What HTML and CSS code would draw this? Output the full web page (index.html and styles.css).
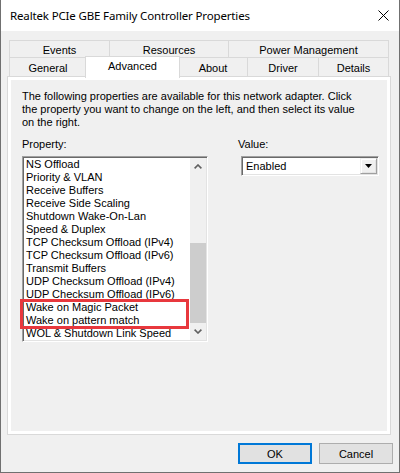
FILE: index.html
```html
<!DOCTYPE html>
<html>
<head>
<meta charset="utf-8">
<title>Realtek PCIe GBE Family Controller Properties</title>
<link rel="stylesheet" href="styles.css">
</head>
<body>
<div class="window">
  <div class="titlebar">
    <span class="title">Realtek PCIe GBE Family Controller Properties</span>
    <svg class="close" width="11" height="11" viewBox="0 0 11 11"><path d="M0.5 0.5L10.5 10.5M10.5 0.5L0.5 10.5" stroke="#000" stroke-width="1" fill="none"/></svg>
  </div>
  <div class="tabs">
    <div class="tabrow row1">
      <div class="tab t-events">Events</div>
      <div class="tab t-resources">Resources</div>
      <div class="tab t-power">Power Management</div>
    </div>
    <div class="tabrow row2">
      <div class="tab t-general">General</div>
      <div class="tab t-advanced selected">Advanced</div>
      <div class="tab t-about">About</div>
      <div class="tab t-driver">Driver</div>
      <div class="tab t-details">Details</div>
    </div>
  </div>
  <div class="panel">
    <div class="page">
      <p class="desc">The following properties are available for this network adapter. Click<br>the property you want to change on the left, and then select its value<br>on the right.</p>
      <div class="fields">
        <div class="col-left">
          <div class="label">Property:</div>
          <div class="listbox">
            <div class="items">
              <div class="item">NS Offload</div>
              <div class="item">Priority &amp; VLAN</div>
              <div class="item">Receive Buffers</div>
              <div class="item">Receive Side Scaling</div>
              <div class="item">Shutdown Wake-On-Lan</div>
              <div class="item">Speed &amp; Duplex</div>
              <div class="item">TCP Checksum Offload (IPv4)</div>
              <div class="item">TCP Checksum Offload (IPv6)</div>
              <div class="item">Transmit Buffers</div>
              <div class="item">UDP Checksum Offload (IPv4)</div>
              <div class="item">UDP Checksum Offload (IPv6)</div>
              <div class="item">Wake on Magic Packet</div>
              <div class="item">Wake on pattern match</div>
              <div class="item">WOL &amp; Shutdown Link Speed</div>
            </div>
            <div class="vscroll">
              <div class="sbtn"><svg width="8" height="5" viewBox="0 0 8 5"><polyline points="0.6,4.4 4,1 7.4,4.4" fill="none" stroke="#606060" stroke-width="1.6"/></svg></div>
              <div class="track"><div class="thumb"></div></div>
              <div class="sbtn"><svg width="8" height="5" viewBox="0 0 8 5"><polyline points="0.6,0.6 4,4 7.4,0.6" fill="none" stroke="#606060" stroke-width="1.6"/></svg></div>
            </div>
            <div class="highlight"></div>
          </div>
        </div>
        <div class="col-right">
          <div class="label">Value:</div>
          <div class="combo">
            <span class="combo-text">Enabled</span>
            <div class="dropbtn"><svg width="7" height="4" viewBox="0 0 7 4"><polygon points="0,0 7,0 3.5,4" fill="#000"/></svg></div>
          </div>
        </div>
      </div>
    </div>
  </div>
  <div class="buttons">
    <button class="btn ok">OK</button>
    <button class="btn">Cancel</button>
  </div>
</div>
</body>
</html>
```
FILE: styles.css
```css
html, body {
  margin: 0;
  padding: 0;
}
body {
  width: 400px;
  height: 473px;
  overflow: hidden;
  background: #f0f0f0;
  font-family: "Liberation Sans", Arial, sans-serif;
  font-size: 11px;
  color: #000;
}
.window {
  box-sizing: border-box;
  width: 400px;
  height: 473px;
  border: 1px solid #707070;
  border-top: none;
  background: #f0f0f0;
}
.titlebar {
  height: 31px;
  background: #fff;
  display: flex;
  align-items: center;
  padding-left: 9px;
}
.title {
  font-family: "Noto Sans", "Open Sans", sans-serif;
  font-size: 11.5px;
  letter-spacing: -0.15px;
  color: #000;
  white-space: nowrap;
}
.close {
  margin-left: auto;
  margin-right: 10px;
  display: block;
}
.tabs {
  margin-top: 9px;
  margin-left: 8px;
}
.tabrow {
  display: flex;
  align-items: flex-start;
}
.tab {
  box-sizing: border-box;
  border: 1px solid #d9d9d9;
  border-bottom: none;
  background: #f0f0f0;
  text-align: center;
  line-height: 13px;
  white-space: nowrap;
}
.tab + .tab {
  margin-left: -1px;
}
.row1 .tab {
  height: 17px;
  padding-top: 3px;
}
.row2 .tab {
  height: 19px;
  padding-top: 4px;
}
.t-events { width: 101px; }
.t-resources { width: 120px; }
.t-power { width: 161px; }
.t-general { width: 78px; }
.t-about { width: 70px; }
.t-driver { width: 72px; }
.t-details { width: 71px; }
.row2 .tab.selected {
  width: 95px;
  height: 22px;
  margin-left: -2px;
  margin-right: -1px;
  margin-top: -1px;
  margin-bottom: -2px;
  padding-top: 3px;
  background: #fff;
  position: relative;
  z-index: 1;
}
.panel {
  box-sizing: border-box;
  margin-left: 6px;
  width: 384px;
  height: 359px;
  border: 1px solid #d9d9d9;
  background: #fff;
  padding: 3px;
}
.page {
  height: 100%;
  box-sizing: border-box;
  background: #f0f0f0;
  padding: 10px 11px 0 11px;
}
.desc {
  margin: 0;
  line-height: 13px;
  white-space: nowrap;
}
.fields {
  display: flex;
  margin-top: 9px;
}
.label {
  line-height: 13px;
}
.col-left {
  width: 186px;
}
.col-right {
  margin-left: 30px;
}
.listbox {
  position: relative;
  box-sizing: border-box;
  margin-top: 5px;
  width: 186px;
  height: 186px;
  border: 1px solid;
  border-color: #a0a0a0 #fff #fff #a0a0a0;
  box-shadow: inset 1px 1px 0 #696969, inset -1px -1px 0 #e3e3e3;
  padding: 1px;
  display: flex;
}
.items {
  flex: 1;
  background: #fff;
  overflow: hidden;
  padding-left: 2px;
}
.item {
  line-height: 13px;
  height: 13px;
  white-space: nowrap;
}
.vscroll {
  width: 16px;
  background: #f0f0f0;
  display: flex;
  flex-direction: column;
}
.sbtn {
  height: 17px;
  display: flex;
  align-items: center;
  justify-content: center;
}
.sbtn svg {
  display: block;
}
.track {
  flex: 1;
  display: flex;
  flex-direction: column;
  justify-content: flex-end;
}
.thumb {
  height: 80px;
  background: #cdcdcd;
}
.highlight {
  position: absolute;
  left: -3px;
  top: 142px;
  width: 169px;
  height: 30px;
  box-sizing: border-box;
  border: 3px solid #e8383d;
}
.combo {
  box-sizing: border-box;
  margin-top: 5px;
  margin-left: 3px;
  width: 138px;
  height: 20px;
  border: 1px solid;
  border-color: #a0a0a0 #fff #fff #a0a0a0;
  box-shadow: inset 1px 1px 0 #696969, inset -1px -1px 0 #e3e3e3;
  padding: 1px;
  display: flex;
  background: #fff;
}
.combo-text {
  flex: 1;
  padding-left: 3px;
  line-height: 16px;
}
.dropbtn {
  box-sizing: border-box;
  width: 17px;
  height: 16px;
  background: #f0f0f0;
  border: 1px solid;
  border-color: #f0f0f0 #a0a0a0 #a0a0a0 #f0f0f0;
  box-shadow: inset 1px 1px 0 #fff, inset -1px -1px 0 #e3e3e3;
  display: flex;
  align-items: center;
  justify-content: center;
}
.dropbtn svg {
  display: block;
}
.buttons {
  display: flex;
  justify-content: flex-end;
  gap: 7px;
  margin-top: 8px;
  padding-right: 6px;
}
.btn {
  box-sizing: border-box;
  width: 74px;
  height: 21px;
  margin: 0;
  padding: 0;
  background: #e1e1e1;
  border: 1px solid #adadad;
  font-family: "Liberation Sans", Arial, sans-serif;
  font-size: 11px;
  color: #000;
}
.btn.ok {
  border: 2px solid #0078d7;
}
```
